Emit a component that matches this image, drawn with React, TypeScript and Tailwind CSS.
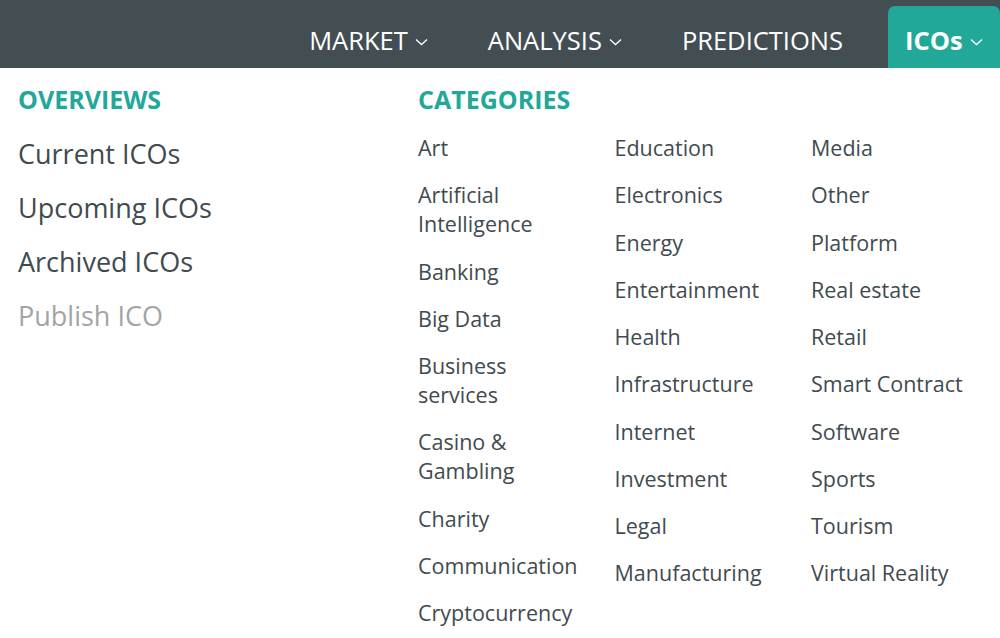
import React from "react";

const overviews = [
    { label: "Current ICOs", muted: false },
    { label: "Upcoming ICOs", muted: false },
    { label: "Archived ICOs", muted: false },
    { label: "Publish ICO", muted: true },
];

const categories = [
    ["Art", "Artificial Intelligence", "Banking", "Big Data", "Business services", "Casino & Gambling", "Charity", "Communication", "Cryptocurrency"],
    ["Education", "Electronics", "Energy", "Entertainment", "Health", "Infrastructure", "Internet", "Investment", "Legal", "Manufacturing"],
    ["Media", "Other", "Platform", "Real estate", "Retail", "Smart Contract", "Software", "Sports", "Tourism", "Virtual Reality"],
];

function Chevron() {
    return (
        <svg width="13" height="8" viewBox="0 0 13 8" className="ml-[7px] mt-[2px]" fill="none">
            <polyline points="1,1.5 6.5,6.5 12,1.5" stroke="currentColor" strokeWidth="1.3" />
        </svg>
    );
}

function NavItem({ label, chevron }: { label: string; chevron?: boolean }) {
    return (
        <div className={`flex items-center h-full pt-[14px] text-white text-[25.5px] leading-none ${chevron ? "pl-[17px] pr-[15px]" : "px-[17px]"}`}>
            <span>{label}</span>
            {chevron && <Chevron />}
        </div>
    );
}

export default function App() {
    return (
        <div className="w-[1000px] h-[638px] bg-white overflow-hidden" style={{ fontFamily: '"Open Sans", sans-serif' }}>
            <header className="h-[68px] bg-[#434e53] flex justify-end items-stretch gap-[28px]">
                <NavItem label="MARKET" chevron />
                <NavItem label="ANALYSIS" chevron />
                <NavItem label="PREDICTIONS" />
                <div className="self-end h-[62px] w-[112px] flex-none bg-[#22a898] rounded-t-[7px] flex items-center pl-[17px] pt-[8px] text-white text-[25.5px] font-bold leading-none">
                    <span>ICOs</span>
                    <Chevron />
                </div>
            </header>

            <div className="flex pl-[18px]">
                <section className="w-[400px] flex-none pt-[15px]">
                    <h2 className="text-[25px] leading-[32px] font-bold text-[#22a898]">OVERVIEWS</h2>
                    <ul className="mt-[12px]">
                        {overviews.map((o) => (
                            <li key={o.label} className={`text-[27px] leading-[54px] ${o.muted ? "text-[#a4a4a4]" : "text-[#3f4b50]"}`}>
                                {o.label}
                            </li>
                        ))}
                    </ul>
                </section>

                <section className="flex-none pt-[15px]">
                    <h2 className="text-[25px] leading-[32px] font-bold text-[#22a898]">CATEGORIES</h2>
                    <div className="flex mt-[18px]">
                        {categories.map((col, i) => (
                            <ul key={i} className="w-[196.5px] flex-none flex flex-col gap-[18.25px]">
                                {col.map((c) => (
                                    <li key={c} className="w-[164px] text-[21.5px] leading-[29px] text-[#3f4b50]">
                                        {c}
                                    </li>
                                ))}
                            </ul>
                        ))}
                    </div>
                </section>
            </div>
        </div>
    );
}
